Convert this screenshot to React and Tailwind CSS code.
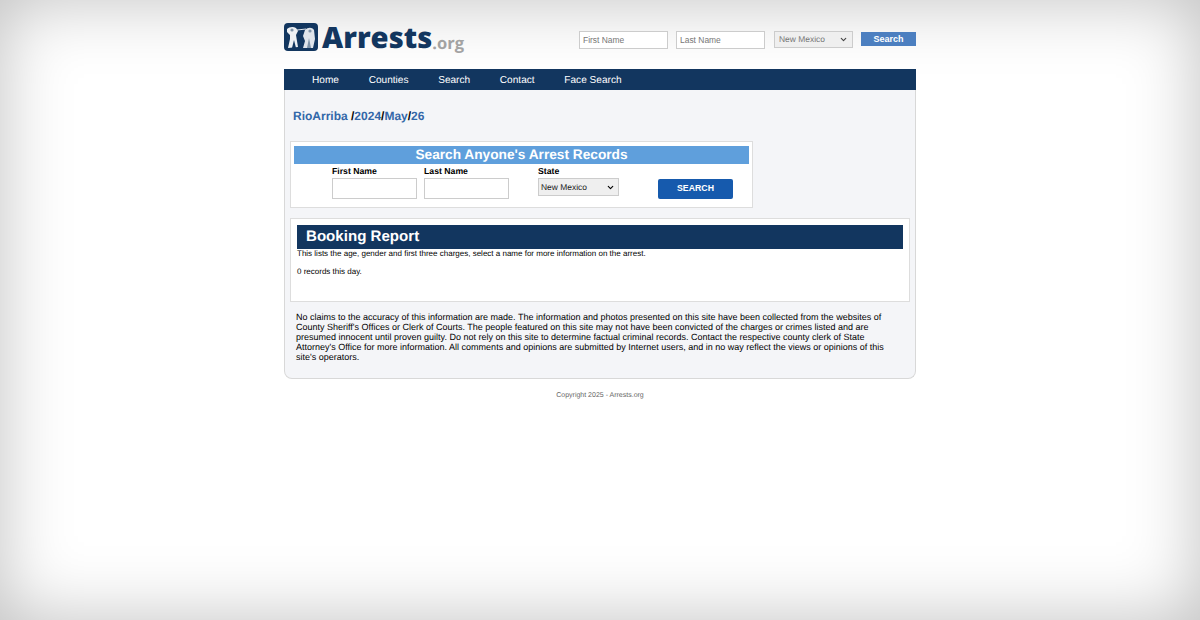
import { ChevronDown } from 'lucide-react'

const sans = "font-['Liberation_Sans',Arial,sans-serif]"

function Logo() {
  return (
    <div className="flex items-start">
      <svg width="34" height="28" viewBox="0 0 34 28" className="mt-px shrink-0">
        <rect width="34" height="28" rx="4" fill="#12365f" />
        <path d="M3 6 C5 4 9 3 12 5 L14 8 L12 12 L14 24 L4 25 L6 16 L6 12 L3 9 Z" fill="#eef1f4" />
        <path d="M13 7 L22 6" stroke="#dfe4ea" strokeWidth="1" fill="none" />
        <path d="M21 7 C24 4 28 4 30 7 L31 16 L29 25 L19 25 L21 18 L19 13 Z" fill="#dfe4ea" />
        <path d="M8 25 L10 17 L12 25 Z" fill="#12365f" />
        <path d="M23 25 L25 15 L27 25 Z" fill="#7f93a8" />
        <circle cx="8" cy="7" r="1.6" fill="#7f93a8" />
        <circle cx="26" cy="8" r="1.6" fill="#7f93a8" />
      </svg>
      <span className="ml-[4px] font-['Open_Sans',sans-serif] font-extrabold text-[29.2px] leading-[30px] text-[#12365f]">Arrests</span>
      <span className="mt-[12px] font-['Open_Sans',sans-serif] font-bold text-[16.5px] leading-[18px] text-[#a3a3a3]">.org</span>
    </div>
  )
}

function TopSearch() {
  return (
    <form className="flex items-start pt-[9px] text-[8.45px] text-[#777]">
      <input placeholder="First Name" className="w-[89px] h-[18px] bg-white border border-[#ccc] px-[3px] outline-none placeholder:text-[#777]" />
      <input placeholder="Last Name" className="ml-[8px] w-[89px] h-[18px] bg-white border border-[#ccc] px-[3px] outline-none placeholder:text-[#777]" />
      <div className="ml-[9px] w-[79px] h-[17px] bg-[#efefef] border border-[#ccc] flex items-center justify-between pl-[4px] pr-[4px] whitespace-nowrap">
        New Mexico
        <ChevronDown size={9} strokeWidth={3} className="text-[#444]" />
      </div>
      <button type="button" className="ml-[8px] mt-[1px] w-[55px] h-[14px] bg-[#4c7fc0] text-white font-bold text-[9px] leading-[14px]">Search</button>
    </form>
  )
}

function SearchBox() {
  return (
    <div className="w-[463px] h-[67px] bg-white border border-[#ddd] p-[3px] pt-[4px]">
      <div className="h-[18px] bg-[#5f9fdc] text-white font-bold text-[13.7px] leading-[18px] text-center">Search Anyone's Arrest Records</div>
      <div className="flex text-[8.7px] text-black">
        <div className="ml-[38px] w-[85px] mr-[7px]">
          <div className="font-bold leading-[12px] mt-px mb-px">First Name</div>
          <div className="h-[21px] bg-white border border-[#ccc]" />
        </div>
        <div className="w-[85px]">
          <div className="font-bold leading-[12px] mt-px mb-px">Last Name</div>
          <div className="h-[21px] bg-white border border-[#ccc]" />
        </div>
        <div className="ml-[29px] w-[81px]">
          <div className="font-bold leading-[12px] mt-px mb-px">State</div>
          <div className="h-[18px] bg-[#efefef] border border-[#ccc] flex items-center justify-between pl-[2px] pr-[3px] text-[8.45px] text-[#222] whitespace-nowrap">
            New Mexico
            <ChevronDown size={9} strokeWidth={3} className="text-black" />
          </div>
        </div>
        <button type="button" className="ml-[39px] mt-[15px] w-[75px] h-[20px] rounded-[2px] bg-[#165aad] text-white font-bold text-[8.76px]">SEARCH</button>
      </div>
    </div>
  )
}

export default function App() {
  return (
    <div className={`${sans} [text-rendering:geometricPrecision] min-h-[620px] bg-white shadow-[inset_0_0_70px_rgba(0,0,0,0.25)]`}>
      <div className="w-[632px] mx-auto">
        <header className="h-[69px] pt-[22px] flex justify-between items-start">
          <Logo />
          <TopSearch />
        </header>

        <nav className="h-[21px] bg-[#12365f] flex pl-[28px] gap-[29.7px] text-[10.1px] leading-[21px] text-white">
          <a className="pt-px">Home</a>
          <a className="pt-px">Counties</a>
          <a className="pt-px">Search</a>
          <a className="pt-px">Contact</a>
          <a className="pt-px">Face Search</a>
        </nav>

        <main className="h-[289px] bg-[#f4f5f8] border border-t-0 border-[#d8d8d8] rounded-b-lg px-[5px]">
          <h2 className="pt-[19px] pl-[3px] text-[12px] leading-[15px] font-bold text-black">
            <a className="text-[#3367a8]">RioArriba</a> /<a className="text-[#3367a8]">2024</a>/<a className="text-[#3367a8]">May</a>/<a className="text-[#3367a8]">26</a>
          </h2>

          <div className="mt-[17px]">
            <SearchBox />
          </div>

          <section className="mt-[10px] h-[84px] bg-white border border-[#ddd] px-[6px] pt-[6px] text-[8px] text-black">
            <div className="h-[24px] bg-[#12365f] pl-[9px] text-white font-bold text-[15.1px] leading-[24px]">Booking Report</div>
            <p className="leading-[10px]">This lists the age, gender and first three charges, select a name for more information on the arrest.</p>
            <p className="mt-[8px] leading-[10px]">0 records this day.</p>
          </section>

          <p className="mt-[10px] px-[6px] w-[604px] text-[9px] leading-[10.1px] text-black">
            No claims to the accuracy of this information are made. The information and photos presented on this site have been collected from the websites of County Sheriff's Offices or Clerk of Courts. The people featured on this site may not have been convicted of the charges or crimes listed and are presumed innocent until proven guilty. Do not rely on this site to determine factual criminal records. Contact the respective county clerk of State Attorney's Office for more information. All comments and opinions are submitted by Internet users, and in no way reflect the views or opinions of this site's operators.
          </p>
        </main>

        <footer className="mt-[13px] text-center text-[7px] leading-[8px] text-[#666]">Copyright 2025 - Arrests.org</footer>
      </div>
    </div>
  )
}
